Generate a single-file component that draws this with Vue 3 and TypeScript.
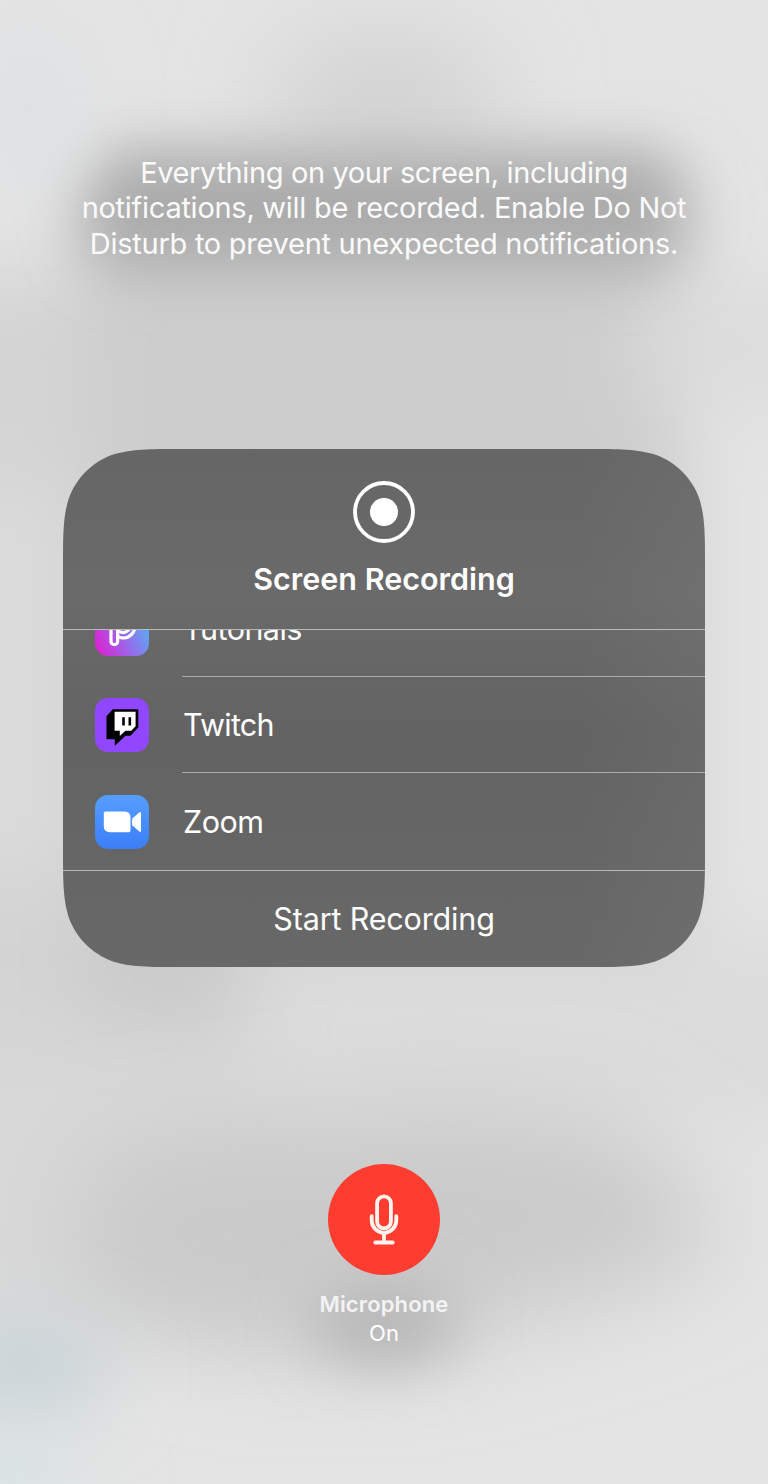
<script setup lang="ts">
interface Broadcaster {
  id: string
  name: string
}

const broadcasters: Broadcaster[] = [
  { id: 'picsart', name: 'Tutorials' },
  { id: 'twitch', name: 'Twitch' },
  { id: 'zoom', name: 'Zoom' },
]

// Continuous-curvature rounded rectangle for the module card.
function smoothRect(w: number, h: number, r: number): string {
  const [a, b, c, d, e, f, g] = [1.528665, 1.08849296, 0.86840694, 0.63149379, 0.37282383, 0.16905956, 0.07491139].map((k) => k * r)
  return [
    `M${a} 0H${w - a}`,
    `C${w - b} 0 ${w - c} 0 ${w - d} ${g}C${w - e} ${f} ${w - f} ${e} ${w - g} ${d}C${w} ${c} ${w} ${b} ${w} ${a}`,
    `V${h - a}`,
    `C${w} ${h - b} ${w} ${h - c} ${w - g} ${h - d}C${w - f} ${h - e} ${w - e} ${h - f} ${w - d} ${h - g}C${w - c} ${h} ${w - b} ${h} ${w - a} ${h}`,
    `H${a}`,
    `C${b} ${h} ${c} ${h} ${d} ${h - g}C${e} ${h - f} ${f} ${h - e} ${g} ${h - d}C0 ${h - c} 0 ${h - b} 0 ${h - a}`,
    `V${a}`,
    `C0 ${b} 0 ${c} ${g} ${d}C${f} ${e} ${e} ${f} ${d} ${g}C${c} 0 ${b} 0 ${a} 0Z`,
  ].join('')
}

const cardClip = { clipPath: `path("${smoothRect(642, 518, 78)}")` }
</script>

<template>
  <main class="screen">
    <svg class="backdrop" viewBox="0 0 768 1484" aria-hidden="true">
      <defs>
        <filter id="soft" x="-100%" y="-100%" width="300%" height="300%"><feGaussianBlur stdDeviation="29" /></filter>
        <filter id="softer" x="-100%" y="-100%" width="300%" height="300%"><feGaussianBlur stdDeviation="38" /></filter>
        <filter id="softest" x="-100%" y="-100%" width="300%" height="300%"><feGaussianBlur stdDeviation="48" /></filter>
      </defs>
      <rect width="768" height="1484" fill="#e4e4e4" />
      <g filter="url(#softer)">
        <rect x="-150" y="275" width="260" height="220" fill="#d4d4d4" />
        <rect x="-150" y="485" width="260" height="420" fill="#dbdbdb" />
        <rect x="-150" y="880" width="260" height="150" fill="#d3d3d3" />
        <rect x="-150" y="1030" width="460" height="300" fill="#d8d8d8" />
        <rect x="85" y="200" width="600" height="740" fill="#cdcdcd" />
        <rect x="640" y="290" width="260" height="110" fill="#dcdcdc" />
        <rect x="85" y="900" width="165" height="130" fill="#cacaca" />
        <rect x="260" y="935" width="640" height="190" fill="#dcdcdc" />
      </g>
      <ellipse cx="385" cy="95" rx="120" ry="60" fill="#d1d1d1" filter="url(#softest)" />
      <path d="M90 1150L430 1100L610 1120L710 1200V1260L600 1300L410 1350H250L70 1300Z" fill="#cacaca" filter="url(#softest)" />
      <rect x="84" y="150" width="600" height="118" rx="40" fill="#ababab" filter="url(#soft)" />
      <ellipse cx="384" cy="1325" rx="75" ry="38" fill="#b5b5b5" filter="url(#soft)" />
      <ellipse cx="20" cy="1370" rx="90" ry="50" fill="#c8d3d7" filter="url(#softer)" />
      <ellipse cx="0" cy="1480" rx="90" ry="50" fill="#dae3e4" filter="url(#softer)" />
      <ellipse cx="30" cy="110" rx="50" ry="80" fill="#dee1e3" filter="url(#softer)" />
    </svg>

    <p class="notice">
      <span class="l1">Everything on your screen, including</span><br />
      <span class="l2">notifications, will be recorded. Enable Do Not</span><br />
      <span class="l3">Disturb to prevent unexpected notifications.</span>
    </p>

    <section class="card" :style="cardClip">
      <header class="head">
        <svg class="record" viewBox="0 0 62 62">
          <circle cx="31" cy="31" r="29" fill="none" stroke="#fff" stroke-width="3.8" />
          <circle cx="31" cy="31" r="14" fill="#fff" />
        </svg>
        <h1>Screen Recording</h1>
      </header>

      <ul class="list">
        <li v-for="item in broadcasters" :key="item.id" class="row">
          <svg v-if="item.id === 'picsart'" class="icon" viewBox="0 0 54 54">
            <defs>
              <linearGradient id="pa" x1="0" y1="0.9" x2="1" y2="0.45">
                <stop offset="0" stop-color="#df20cf" />
                <stop offset="0.45" stop-color="#a65be6" />
                <stop offset="1" stop-color="#56adf4" />
              </linearGradient>
            </defs>
            <rect width="54" height="54" rx="13" fill="url(#pa)" />
            <g fill="none" stroke="#fff" stroke-width="3.2">
              <path d="M16 23V39.4a3.3 3.3 0 0 0 6.6 0V26" />
              <path d="M16 23a12 12 0 1 1 12 13q-4.6 0-5.4-2.4" />
              <circle cx="28" cy="24" r="6.6" />
            </g>
          </svg>
          <svg v-else-if="item.id === 'twitch'" class="icon" viewBox="0 0 54 54">
            <rect width="54" height="54" rx="13" fill="#9147ff" />
            <path d="M17.7 11.2H43.3V29.5L35.4 37.7H30.5L26.8 41.3L19.8 47.8V41.3H11.5V18.3Z" fill="#000" />
            <path d="M19.6 13.7H40.6V28.3L36.3 32.8H30.4L24.8 38V32.8H19.6Z" fill="#fff" />
            <path d="M28.5 19.2V27.4M34.8 19.2V27.4" stroke="#000" stroke-width="2.6" />
          </svg>
          <svg v-else class="icon" viewBox="0 0 54 54">
            <defs>
              <linearGradient id="zm" x1="0" y1="0" x2="0" y2="1">
                <stop offset="0" stop-color="#559eff" />
                <stop offset="1" stop-color="#3b7ef7" />
              </linearGradient>
            </defs>
            <rect width="54" height="54" rx="13" fill="url(#zm)" />
            <path d="M10.5 16.5H29.5Q35.5 16.5 35.5 22.5V35.5Q35.5 37.2 33.8 37.2H15Q8.8 37.2 8.8 31V18.2Q8.8 16.5 10.5 16.5Z" fill="#fff" />
            <path d="M37.3 23.6L44.2 17.4Q46 16.2 46 18V35.8Q46 37.6 44.2 36.4L37.3 30.2Q36.6 26.9 37.3 23.6Z" fill="#fff" />
          </svg>
          <span class="name" :class="item.id">{{ item.name }}</span>
        </li>
      </ul>

      <button class="start" type="button"><span>Start Recording</span></button>
    </section>

    <section class="mic">
      <button class="mic-button" type="button" aria-label="Microphone">
        <svg viewBox="0 0 30 52">
          <g fill="none" stroke="#fff5ee" stroke-width="3.8" stroke-linecap="round">
            <rect x="8.1" y="2.4" width="13.8" height="32" rx="6.9" />
            <path d="M2.7 22.2V26.5A12.3 12.3 0 0 0 27.3 26.5V22.2M15 39V48.3M6.3 48.5H23.7" />
          </g>
        </svg>
      </button>
      <strong>Microphone</strong>
      <span class="state">On</span>
    </section>
  </main>
</template>

<style>
body {
  margin: 0;
}
</style>

<style scoped>
.screen {
  position: relative;
  display: flex;
  flex-direction: column;
  align-items: center;
  box-sizing: border-box;
  width: 768px;
  height: 1484px;
  padding-top: 155px;
  overflow: hidden;
  color: #fff;
  font-family: Inter, "Liberation Sans", sans-serif;
}

.backdrop {
  position: absolute;
  inset: 0;
  width: 768px;
  height: 1484px;
}

.notice {
  position: relative;
  height: 106px;
  margin: 0;
  font-size: 29px;
  line-height: 35.3px;
  text-align: center;
  white-space: nowrap;
  color: #fbfbfb;
}

.l1 {
  letter-spacing: -0.38px;
}

.l2,
.l3 {
  letter-spacing: -0.27px;
}

.card {
  position: relative;
  display: flex;
  flex-direction: column;
  width: 642px;
  height: 518px;
  margin-top: 188px;
  background: linear-gradient(90deg, transparent 80%, rgba(255, 255, 255, 0.04)), linear-gradient(#666, #6a6a6a 28%, #636363 55%, #686868);
}

.head {
  display: flex;
  flex-direction: column;
  align-items: center;
  box-sizing: border-box;
  height: 180px;
  padding-top: 32px;
}

.record {
  width: 62px;
  height: 62px;
}

h1 {
  margin: 17px 0 0;
  font-size: 30.5px;
  font-weight: 600;
  line-height: 38px;
}

.list {
  display: flex;
  flex-direction: column;
  justify-content: flex-end;
  box-sizing: border-box;
  height: 242px;
  margin: 0;
  padding: 0;
  overflow: hidden;
  list-style: none;
  border-top: 1px solid #b9b9b9;
  border-bottom: 1px solid #b9b9b9;
}

.row {
  position: relative;
  display: flex;
  flex: none;
  align-items: center;
  gap: 34px;
  height: 96.5px;
  padding-left: 32px;
}

.row + .row::before {
  position: absolute;
  top: -1.2px;
  right: 0;
  left: 119px;
  height: 1px;
  background: #acacac;
  content: "";
}

.icon {
  width: 54px;
  height: 54px;
}

.name,
.start {
  font-size: 30.5px;
  line-height: 38px;
}

.name {
  letter-spacing: -0.5px;
}

.name.twitch {
  letter-spacing: -0.75px;
}

.start {
  flex: 1;
  padding: 0;
  border: 0;
  background: none;
  color: #fff;
  font-family: inherit;
  letter-spacing: -0.16px;
}

.mic {
  position: relative;
  display: flex;
  flex-direction: column;
  align-items: center;
  margin-top: 197px;
}

.mic-button {
  display: grid;
  place-items: center;
  width: 112px;
  height: 111px;
  padding: 0;
  border: 0;
  border-radius: 50%;
  background: #ff3c30;
}

.mic-button svg {
  width: 30px;
  height: 52px;
}

.mic strong,
.state {
  font-size: 22px;
  line-height: 29px;
}

.mic strong {
  margin-top: 15px;
  font-weight: 600;
  letter-spacing: 0.15px;
  color: #f3f3f3;
}
</style>
